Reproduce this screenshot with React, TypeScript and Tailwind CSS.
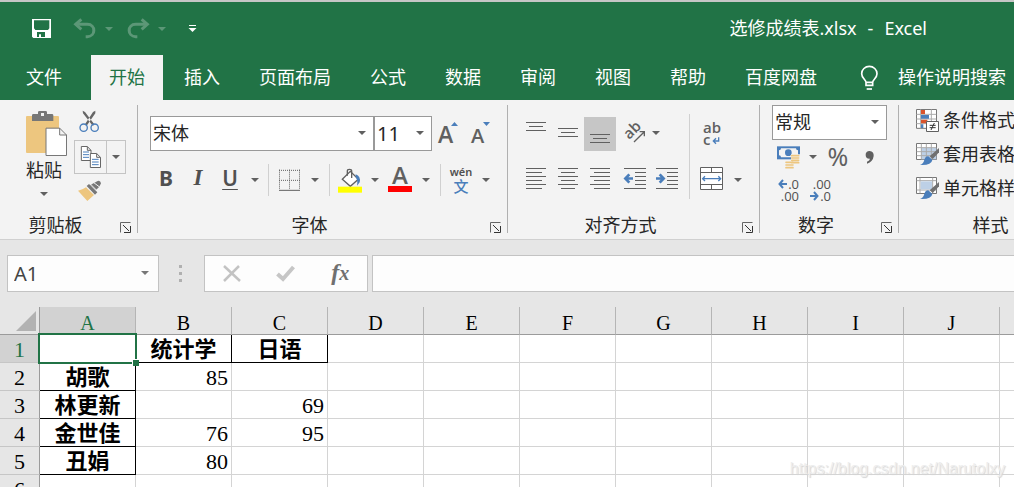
import type { ReactNode } from "react";
import { cx } from "class-variance-authority";

const TABS = ["开始", "插入", "页面布局", "公式", "数据", "审阅", "视图", "帮助", "百度网盘"];
const COLUMNS = ["A", "B", "C", "D", "E", "F", "G", "H", "I", "J"];

const ROWS: string[][] = [
  ["", "统计学", "日语"],
  ["胡歌", "85", ""],
  ["林更新", "", "69"],
  ["金世佳", "76", "95"],
  ["丑娟", "80", ""],
  ["", "", ""],
];

const UI_FONT = "font-['Noto_Sans','Noto_Sans_CJK_SC',sans-serif]";
const CELL_FONT = "font-['Liberation_Serif','Noto_Sans_CJK_SC',serif]";

function Caret({ className }: { className?: string }) {
  return (
    <svg viewBox="0 0 8 4" fill="currentColor" className={cx("h-1 w-2", className)}>
      <path d="M0 0H8L4 4Z" />
    </svg>
  );
}

function CaretButton({ label, className }: { label: string; className?: string }) {
  return (
    <button aria-label={label} className={cx("flex h-8 shrink-0 items-center justify-center", className)}>
      <Caret className="text-[#606060]" />
    </button>
  );
}

function IconButton({ label, className, children }: { label: string; className?: string; children: ReactNode }) {
  return (
    <button
      aria-label={label}
      className={cx("flex h-[34px] w-8 shrink-0 items-center justify-center", className)}
    >
      {children}
    </button>
  );
}

function SelectBox({ label, value, className }: { label: string; value: string; className?: string }) {
  return (
    <div className={cx("relative h-[35px] shrink-0", className)}>
      <select
        aria-label={label}
        className="h-full w-full appearance-none border border-[#999] bg-white pl-[2px] text-[#262626] outline-none"
      >
        <option>{value}</option>
      </select>
      <Caret className="pointer-events-none absolute top-[15px] right-[8px] text-[#606060]" />
    </div>
  );
}

function Divider() {
  return <div className="mx-1 h-8 w-px shrink-0 bg-[#d0d0d0]" />;
}

function Group({ title, className, launcher = true, children }: {
  title: string;
  className?: string;
  launcher?: boolean;
  children: ReactNode;
}) {
  return (
    <section className={cx("flex shrink-0 flex-col", className)}>
      <div className="h-[110px]">{children}</div>
      <div className="flex h-[29px] items-start">
        <h2 className="flex-1 text-center text-[18px] leading-[30px]">{title}</h2>
        {launcher && (
          <button aria-label={`${title}设置`} className="mt-3 mr-[6px] ml-2">
            <svg viewBox="0 0 12 11" className="h-[11px] w-3" fill="none" stroke="#666">
              <path d="M1.5 10.5V.5H11.5" />
              <path d="M4 3L10 9M11.5 4V10.5H5" stroke="#333" />
            </svg>
          </button>
        )}
      </div>
    </section>
  );
}

function GroupLine() {
  return <div className="mt-[5px] h-32 w-px shrink-0 bg-[#b0b0b0]" />;
}

// Six or three ruled lines, each given as [start, end] on a 32px wide button.
function Lines({ top, rows }: { top: number; rows: [number, number][] }) {
  return (
    <svg viewBox="0 0 32 34" className="h-[34px] w-8" stroke="#606060">
      {rows.map(([from, to], i) => (
        <path key={i} d={`M${from} ${top + i * 4 + 0.5}H${to}`} />
      ))}
    </svg>
  );
}

function TitleBar() {
  return (
    <header className="flex h-[55px] items-center border-t-2 border-[#c6c6c6] pr-[87px] pl-8 text-white">
      <button aria-label="保存">
        <svg viewBox="96 57 57 57" className="size-[19px]">
          <path fill="#fff" fillRule="evenodd" d="M96 57H153V114H100L96 110ZM102 61V85L106 90H144L148 85V61ZM111 96V111H117V103H123V111H135V96Z" />
        </svg>
      </button>
      <button aria-label="撤消" className="ml-[22px]">
        <svg viewBox="219 57 69 63" className="h-[21px] w-[23px]" fill="none" stroke="#5c9777" strokeWidth="9">
          <path d="M244 61L227 76L244 91" />
          <path d="M228 76H262C288 76 288 112 262 113H257" />
        </svg>
      </button>
      <Caret className="ml-[9px] text-[#5c9777]" />
      <button aria-label="恢复" className="ml-[14px]">
        <svg viewBox="378 57 69 63" className="h-[21px] w-[23px]" fill="none" stroke="#5c9777" strokeWidth="9">
          <path d="M422 61L439 76L422 91" />
          <path d="M438 76H404C378 76 378 112 404 113H409" />
        </svg>
      </button>
      <Caret className="ml-2 text-[#5c9777]" />
      <button aria-label="自定义快速访问工具栏" className="ml-[22px]">
        <svg viewBox="0 0 9 9" className="size-[9px] fill-white">
          <path d="M1 1H8V2H1ZM.5 4H8.5L4.5 8Z" />
        </svg>
      </button>
      <h1 className="ml-auto pb-[2px] text-[18px] leading-6">
        选修成绩表.xlsx<span className="mx-[11px]">-</span>Excel
      </h1>
    </header>
  );
}

function TabBar() {
  return (
    <nav className="flex h-[45px] shrink-0 overflow-hidden text-[18px] whitespace-nowrap text-white">
      <button className="mr-[29px] pl-[26px]">文件</button>
      <div className="flex gap-[3px]">
        {TABS.map((tab, i) => (
          <button key={tab} className={cx("px-[18px]", i === 0 && "bg-[#f3f3f3] text-[#217346]")}>
            {tab}
          </button>
        ))}
      </div>
      <button className="ml-[25px] flex items-center gap-5">
        <svg viewBox="480 192 54 75" className="h-[25px] w-[18px]" fill="none" stroke="#fff" strokeWidth="5">
          <path d="M498 253V244C498 236 485 232 485 218A23 22 0 0 1 531 218C531 232 518 236 518 244V253ZM496 244H520" />
          <path d="M500 264H516" />
        </svg>
        操作说明搜索
      </button>
    </nav>
  );
}

function ClipboardGroup() {
  return (
    <Group title="剪贴板" className="w-[137px]">
      <div className="flex pt-[10px] pl-[21px]">
        <button className="flex w-[46px] flex-col items-center text-[18px] leading-7">
          <svg viewBox="63 30 138 138" className="size-[46px]">
            <path fill="#edc67f" d="M78 51Q78 48 81 48H174Q177 48 177 51V159H81Q78 159 78 156Z" />
            <path fill="#777" fillRule="evenodd" d="M96 63V46Q96 42 100 42H114V37Q114 33 118 33H137Q141 33 141 37V42H156Q160 42 160 46V63ZM123 39V48H132V39Z" />
            <path fill="#fff" stroke="#777" strokeWidth="3" d="M138 84.500H179L199.500 105V166.500H138ZM179 84V105H200" />
          </svg>
          粘贴
          <Caret className="mt-2 text-[#606060]" />
        </button>
        <div className="ml-[7px] flex flex-col">
          <button aria-label="剪切" className="pl-1">
            <svg viewBox="234 30 66 69" className="h-[23px] w-[22px]" fill="none">
              <path fill="#666" d="M248 32L255 36L284 74L278 77L249 40ZM286 32L279 36L254 74L260 77L286 40Z" />
              <g stroke="#4a7ebb" strokeWidth="4">
                <circle cx="251" cy="83" r="11" />
                <circle cx="284" cy="83" r="11" />
              </g>
            </svg>
          </button>
          <div className="mt-[7px] flex h-[34px] w-[52px] border border-[#c4c4c4]">
            <button aria-label="复制" className="flex w-8 items-center justify-center border-r border-[#c4c4c4]">
              <svg viewBox="237 132 66 72" className="h-6 w-[22px]" fill="#fff" stroke="#666" strokeWidth="3">
                <path d="M241 136.500H259L270 148V178.500H241ZM259 137V148H270" />
                <path stroke="#4a7ebb" d="M246 153H264M246 161H264M246 169H264" />
                <path d="M268 157.500H287L298.500 169V199.500H268ZM287 158V169H298" />
                <path stroke="#4a7ebb" d="M273 175H293M273 183H293M273 191H293" />
              </svg>
            </button>
            <button aria-label="复制选项" className="flex flex-1 items-center justify-center">
              <Caret className="text-[#606060]" />
            </button>
          </div>
          <button aria-label="格式刷" className="mt-[6px] pl-1">
            <svg viewBox="234 240 72 66" className="h-[22px] w-6">
              <path fill="#edc67f" d="M234 272Q247 270 258 262L282 285L262 303Z" />
              <path fill="#777" d="M260 258L267 252L292 277L285 284ZM271 255L293 243Q301 240 303 250L298 260L288 270Z" />
              <path stroke="#f3f3f3" strokeWidth="3" d="M269 250L294 275M280 247L300 262" />
            </svg>
          </button>
        </div>
      </div>
    </Group>
  );
}

function FontGroup() {
  return (
    <Group title="字体" className="w-[369px]">
      <div className="flex items-center pt-4 pl-3">
        <SelectBox label="字体" value="宋体" className="w-[224px] text-[18px]" />
        <SelectBox label="字号" value="11" className="w-[58px] text-[20px]" />
        <IconButton label="增大字号" className="font-['Open_Sans',sans-serif]">
          <svg viewBox="0 0 32 34" className="h-[34px] w-8">
            <text x="6" y="26" fontSize="23" fontWeight="600" fill="#606060">A</text>
            <path fill="#4a7ebb" d="M19 9H26L22.500 5Z" />
          </svg>
        </IconButton>
        <IconButton label="减小字号" className="font-['Open_Sans',sans-serif]">
          <svg viewBox="0 0 32 34" className="h-[34px] w-8">
            <text x="7" y="26" fontSize="20" fontWeight="600" fill="#606060">A</text>
            <path fill="#4a7ebb" d="M19 5H26L22.500 9Z" />
          </svg>
        </IconButton>
      </div>
      <div className="mt-3 flex items-center pl-3 text-[#505050]">
        <button aria-label="加粗" className="h-8 w-8 pb-1 text-[21px] leading-7 font-bold">B</button>
        <button aria-label="倾斜" className="h-8 w-8 pb-1 font-['Liberation_Serif',serif] text-[23px] leading-7 font-bold italic">I</button>
        <button aria-label="下划线" className="h-8 w-8 pb-1 text-[21px] leading-7 font-semibold underline decoration-1 underline-offset-3">U</button>
        <CaretButton label="下划线选项" className="w-[18px]" />
        <Divider />
        <IconButton label="边框">
          <svg viewBox="54 202 69 66" className="h-[22px] w-[23px]" fill="none" stroke="#606060" strokeWidth="3">
            <path strokeDasharray="3 3" d="M57 206H120M57 236H120M58.500 204V264M88.500 204V264M118.500 204V264" />
            <path d="M57 266H120" />
          </svg>
        </IconButton>
        <CaretButton label="边框选项" className="w-5" />
        <Divider />
        <IconButton label="填充颜色">
          <svg viewBox="234 199 72 75" className="h-[25px] w-6" fill="none">
            <path fill="#fff" stroke="#606060" strokeWidth="4" d="M247 233L271 209L295 233L271 254Z" />
            <path stroke="#606060" strokeWidth="4" d="M262 222V208Q262 203 268 203Q275 203 275 208V229" />
            <path fill="#4a7ebb" d="M287 218Q303 224 299 242L291 252Q294 236 287 226Z" />
            <path fill="#ff0" d="M234 255H306V273H234Z" />
          </svg>
        </IconButton>
        <CaretButton label="填充颜色选项" className="w-[18px]" />
        <button
          aria-label="字体颜色"
          className="flex h-8 w-8 flex-col items-center font-['Open_Sans',sans-serif] text-[24px] leading-[22px] font-semibold text-[#606060]"
        >
          A
          <i className="h-[6px] w-6 bg-[#f00]" />
        </button>
        <CaretButton label="字体颜色选项" className="w-5" />
        <Divider />
        <button aria-label="拼音" className="flex h-8 w-8 flex-col items-center text-[11px] leading-[15px] font-semibold">
          <span>wén</span>
          <span className="text-[15px] font-medium text-[#4a7ebb]">文</span>
        </button>
        <CaretButton label="拼音选项" className="w-[18px]" />
      </div>
    </Group>
  );
}

function AlignmentGroup() {
  const short: [number, number][] = [[6, 26], [9, 23], [6, 26]];
  return (
    <Group title="对齐方式" className="w-[251px]">
      <div className="flex pt-[14px] pl-3">
        <div>
          <div className="flex pt-[3px]">
            <IconButton label="顶端对齐"><Lines top={5} rows={short} /></IconButton>
            <IconButton label="垂直居中"><Lines top={11} rows={short} /></IconButton>
            <IconButton label="底端对齐" className="bg-[#c6c6c6]"><Lines top={17} rows={short} /></IconButton>
            <IconButton label="方向">
              <svg viewBox="348 51 96 102" className="h-[34px] w-8 font-['Open_Sans',sans-serif]" fill="none">
                <text transform="translate(388 120) rotate(-45)" fontSize="45" fontWeight="600" fill="#606060">ab</text>
                <path stroke="#606060" strokeWidth="4" d="M402 126L433 95M419 95H433V109" />
              </svg>
            </IconButton>
            <CaretButton label="方向选项" className="w-4" />
          </div>
          <div className="mt-3 flex">
            <IconButton label="左对齐">
              <Lines top={5} rows={[[6, 26], [6, 22], [6, 26], [6, 22], [6, 26], [6, 22]]} />
            </IconButton>
            <IconButton label="居中">
              <Lines top={5} rows={[[6, 26], [9, 23], [6, 26], [9, 23], [6, 26], [9, 23]]} />
            </IconButton>
            <IconButton label="右对齐">
              <Lines top={5} rows={[[6, 26], [10, 26], [6, 26], [10, 26], [6, 26], [10, 26]]} />
            </IconButton>
            <IconButton label="减少缩进量">
              <svg viewBox="348 189 96 102" className="h-[34px] w-8" fill="none" strokeWidth="3" stroke="#606060">
                <path d="M372 205.500H438M405 217.500H438M405 229.500H438M405 241.500H438M405 253.500H438M372 265.500H438" />
                <path stroke="#4a7ebb" strokeWidth="8" d="M399 235.500H376M388 223L376 235.500L388 248" />
              </svg>
            </IconButton>
            <IconButton label="增加缩进量">
              <svg viewBox="444 189 96 102" className="h-[34px] w-8" fill="none" strokeWidth="3" stroke="#606060">
                <path d="M468 205.500H534M501 217.500H534M501 229.500H534M501 241.500H534M501 253.500H534M468 265.500H534" />
                <path stroke="#4a7ebb" strokeWidth="8" d="M468 235.500H491M479 223L491 235.500L479 248" />
              </svg>
            </IconButton>
          </div>
        </div>
        <div className="ml-[9px] h-[85px] w-px bg-[#d0d0d0]" />
        <div className="ml-[6px] pt-[3px]">
          <button
            aria-label="自动换行"
            className="flex h-[34px] w-8 flex-col items-start pl-[7px] font-['Open_Sans',sans-serif] text-[15px] leading-[12px] font-semibold text-[#606060]"
          >
            <span className="pt-[4px]">ab</span>
            <span className="flex items-end gap-[2px]">
              c
              <svg viewBox="639 105 24 24" className="size-2" fill="none" stroke="#4a7ebb" strokeWidth="4">
                <path d="M659 106V117H643M651 109L643 117L651 125" />
              </svg>
            </span>
          </button>
          <div className="mt-3 flex items-center">
            <IconButton label="合并后居中">
              <svg viewBox="588 189 96 102" className="h-[34px] w-8" fill="#fff" strokeWidth="3" stroke="#606060">
                <path d="M601.500 202.500H667.500V268.500H601.500ZM601 217.500H668M601 253.500H668M634.500 202V217M634.500 254V268" />
                <path fill="none" stroke="#4a7ebb" strokeWidth="4" d="M609 236H661M615 229L608 236L615 243M655 229L662 236L655 243" />
              </svg>
            </IconButton>
            <CaretButton label="合并选项" className="w-5" />
          </div>
        </div>
      </div>
    </Group>
  );
}

function NumberGroup() {
  return (
    <Group title="数字" className="w-[138px]">
      <div className="pt-[5px] pl-3">
        <SelectBox label="数字格式" value="常规" className="w-[115px] text-[18px]" />
        <div className="flex items-center text-[#606060]">
          <IconButton label="会计数字格式">
            <svg viewBox="66 137 69 69" className="size-[23px]" fill="none">
              <path fill="#4a7ebb" d="M66 138H135V177H66Z" />
              <path fill="#f3f3f3" d="M78 144H123Q123 150 129 150V165Q123 165 123 171H78Q78 165 72 165V150Q78 150 78 144Z" />
              <circle cx="100" cy="157" r="10" fill="#4a7ebb" />
              <path fill="#f3f3f3" d="M108 162H135V206H90V182H108Z" />
              <path stroke="#edc67f" strokeWidth="5" strokeLinecap="round" d="M110 166H131M110 173H131M110 180H131M110 187H131M93 186H114M93 194H114M93 202H114" />
            </svg>
          </IconButton>
          <CaretButton label="会计数字格式选项" className="w-[18px]" />
          <button aria-label="百分比样式" className="h-8 w-8 pb-[2px] text-[25px] leading-[30px]">%</button>
          <IconButton label="千位分隔样式">
            <svg viewBox="336 147 30 42" className="h-[14px] w-[10px] fill-[#606060]">
              <path d="M338 162A11 11 0 0 1 350 150Q363 151 362 165Q360 182 342 188V182Q350 179 351 173Q338 174 338 162Z" />
            </svg>
          </IconButton>
        </div>
        <div className="flex gap-[5px] pt-1 font-['Open_Sans',sans-serif] text-[13px] leading-[12px] text-[#505050]">
          <button aria-label="增加小数位数" className="flex w-[27px] flex-col items-end">
            <span className="flex items-center gap-px">
              <svg viewBox="0 0 9 10" className="h-[10px] w-[9px]" fill="none" stroke="#4a7ebb" strokeWidth="2">
                <path d="M9 5H1.500M5 1L1.500 5L5 9" />
              </svg>
              .0
            </span>
            <span>.00</span>
          </button>
          <button aria-label="减少小数位数" className="flex w-[27px] flex-col items-end">
            <span>.00</span>
            <span className="flex items-center gap-px">
              <svg viewBox="0 0 9 10" className="h-[10px] w-[9px]" fill="none" stroke="#4a7ebb" strokeWidth="2">
                <path d="M0 5H7.500M4 1L7.500 5L4 9" />
              </svg>
              .0
            </span>
          </button>
        </div>
      </div>
    </Group>
  );
}

function Brush() {
  return (
    <g transform="translate(486 132)">
      <path fill="#707070" d="M69 15V28L50 48L41 40Z" />
      <path fill="#4a7ebb" d="M37 40L49 51Q46 68 12 66Q23 61 25 50Q29 39 37 40Z" />
    </g>
  );
}

function StylesGroup() {
  return (
    <Group title="样式" launcher={false} className="min-w-[183px]">
      <div className="flex flex-col pt-[3px] pl-[17px] text-[18px] leading-[34px]">
        <button className="flex items-center gap-1">
          <svg viewBox="486 27 69 69" className="size-[23px]" fill="none" strokeWidth="3">
            <path fill="#fff" stroke="#777" d="M487.500 28.500H547.500V85H487.500Z" />
            <path stroke="#aaa" d="M487 43H547M487 57H547M487 71H547M500 28V85M532 28V85" />
            <path fill="#d9532c" d="M501 30H513V42H501ZM501 59H520V70H501Z" />
            <path fill="#4a7ebb" d="M501 45H525V56H501ZM501 73H508V84H501Z" />
            <path fill="#fff" stroke="#606060" d="M517.500 64.500H553.500V94.500H517.500Z" />
            <path stroke="#333" d="M527 76H545M527 83H545M541 69L531 90" />
          </svg>
          条件格式
        </button>
        <button className="flex items-center gap-1">
          <svg viewBox="486 132 69 69" className="size-[23px]" fill="none" strokeWidth="3">
            <path fill="#fff" stroke="#777" d="M487.500 133.500H547.500V181.500H487.500Z" />
            <path fill="#bdd0e6" d="M502 147H547V181H502Z" />
            <path stroke="#aaa" d="M488 146H547M488 158H547M488 170H547M502 134V181M517 134V181M532 134V181" />
            <Brush />
          </svg>
          套用表格
        </button>
        <button className="flex items-center gap-1">
          <svg viewBox="486 132 69 69" className="size-[23px]" fill="none" strokeWidth="3">
            <path fill="#fff" stroke="#777" d="M487.500 133.500H547.500V181.500H487.500Z" />
            <path stroke="#aaa" d="M488 143H547M488 171H547M498 134V181M536 134V181" />
            <path fill="#bdd0e6" d="M500 145H534V169H500Z" />
            <Brush />
          </svg>
          单元格样
        </button>
      </div>
    </Group>
  );
}

function FormulaBar() {
  return (
    <div className="flex h-[67px] shrink-0 border-t border-[#d0d0d0] pt-[15px] pl-[7px]">
      <div className="relative h-[37px] w-[152px] shrink-0">
        <input
          aria-label="名称框"
          defaultValue="A1"
          className="h-full w-full border border-[#c3c3c3] bg-[#fdfdfd] pl-[6px] text-[20px] text-[#444] outline-none"
        />
        <Caret className="pointer-events-none absolute top-4 right-[10px] text-[#777]" />
      </div>
      <div className="mx-5 flex flex-col gap-1 pt-[10px]">
        <i className="size-[3px] bg-[#b0b0b0]" />
        <i className="size-[3px] bg-[#b0b0b0]" />
        <i className="size-[3px] bg-[#b0b0b0]" />
      </div>
      <div className="ml-[2px] flex h-[37px] w-[164px] shrink-0 items-center justify-around border border-[#c3c3c3] bg-[#fdfdfd]">
        <button aria-label="取消">
          <svg viewBox="0 0 18 17" className="h-[17px] w-[18px]" fill="none" stroke="#c3c3c3" strokeWidth="2.500">
            <path d="M1 1L17 16M16 1L1 16" />
          </svg>
        </button>
        <button aria-label="输入">
          <svg viewBox="0 0 19 17" className="h-[17px] w-[19px]" fill="none" stroke="#c6c6c6" strokeWidth="4">
            <path d="M1.500 9L7 14L17.500 2" />
          </svg>
        </button>
        <button
          aria-label="插入函数"
          className="pb-[2px] font-['Liberation_Serif',serif] text-[24px] leading-7 font-bold text-[#707070] italic"
        >
          f<span className="text-[20px]">x</span>
        </button>
      </div>
      <input
        aria-label="编辑栏"
        className="ml-1 h-[37px] min-w-0 flex-1 border border-r-0 border-[#c3c3c3] bg-[#fdfdfd] px-2 outline-none"
      />
    </div>
  );
}

function Sheet() {
  return (
    <table className={cx("w-full table-fixed border-separate border-spacing-0 bg-white text-[22px] leading-6 text-black", CELL_FONT)}>
      <colgroup>
        <col className="w-10" />
        {COLUMNS.map((c) => (
          <col key={c} className="w-24" />
        ))}
        <col />
      </colgroup>
      <thead>
        <tr className="h-7 bg-[#e6e6e6]">
          <th aria-label="全选" className="border-r border-b border-[#9b9b9b] p-0">
            <svg viewBox="0 0 20 20" className="mr-[3px] ml-auto size-5 fill-[#b2b2b2]">
              <path d="M20 0V20H0Z" />
            </svg>
          </th>
          {COLUMNS.map((c, i) => (
            <th
              key={c}
              className={cx(
                "border-r border-b border-r-[#b5b5b5] border-b-[#9b9b9b] p-0 pt-[5px] text-[20px] leading-[22px] font-normal",
                i === 0 && "bg-[#d2d2d2] text-[#217346]",
              )}
            >
              {c}
            </th>
          ))}
          <th className="border-b border-[#9b9b9b] p-0" />
        </tr>
      </thead>
      <tbody>
        {ROWS.map((row, r) => (
          <tr key={r} className="h-7">
            <th
              className={cx(
                "border-r border-b border-r-[#9b9b9b] border-b-[#c6c6c6] p-0 pt-[3px] font-normal",
                r === 0 ? "bg-[#d2d2d2] text-[#217346]" : "bg-[#e6e6e6]",
              )}
            >
              {r + 1}
            </th>
            {[...COLUMNS, ""].map((_, c) => {
              const value = row[c] ?? "";
              const isLabel = (r === 0 && c < 3) || (c === 0 && r < 5);
              return (
                <td
                  key={c}
                  className={cx(
                    "relative border-r border-b p-0 pt-[3px] whitespace-nowrap",
                    isLabel ? "border-black text-center font-bold" : "border-[#d4d4d4] pr-[3px] text-right",
                    c === 10 && "border-r-0",
                  )}
                >
                  {value}
                  {r === 0 && c === 0 && (
                    <div className="absolute -inset-[2px] z-10 border-2 border-[#217346]">
                      <div className="absolute -right-[4px] -bottom-[4px] size-[7px] border-t border-l border-white bg-[#217346]" />
                    </div>
                  )}
                </td>
              );
            })}
          </tr>
        ))}
      </tbody>
    </table>
  );
}

export default function App() {
  return (
    <div className={cx("relative flex h-screen flex-col overflow-hidden bg-[#e6e6e6] text-[#262626]", UI_FONT)}>
      <div className="shrink-0 bg-[#217346]">
        <TitleBar />
        <TabBar />
      </div>
      <div className="flex h-[139px] shrink-0 overflow-hidden bg-[#f3f3f3] whitespace-nowrap">
        <ClipboardGroup />
        <GroupLine />
        <FontGroup />
        <GroupLine />
        <AlignmentGroup />
        <GroupLine />
        <NumberGroup />
        <GroupLine />
        <StylesGroup />
      </div>
      <FormulaBar />
      <div className="min-h-0 flex-1 overflow-hidden pt-px">
        <Sheet />
      </div>
      <p className="absolute right-[9px] bottom-[6px] z-20 font-['Liberation_Sans',sans-serif] text-[16px] leading-6 text-[#eee] [text-shadow:1px_1px_1px_#d4d4d4]">
        https://blog.csdn.net/Narutolxy
      </p>
    </div>
  );
}
